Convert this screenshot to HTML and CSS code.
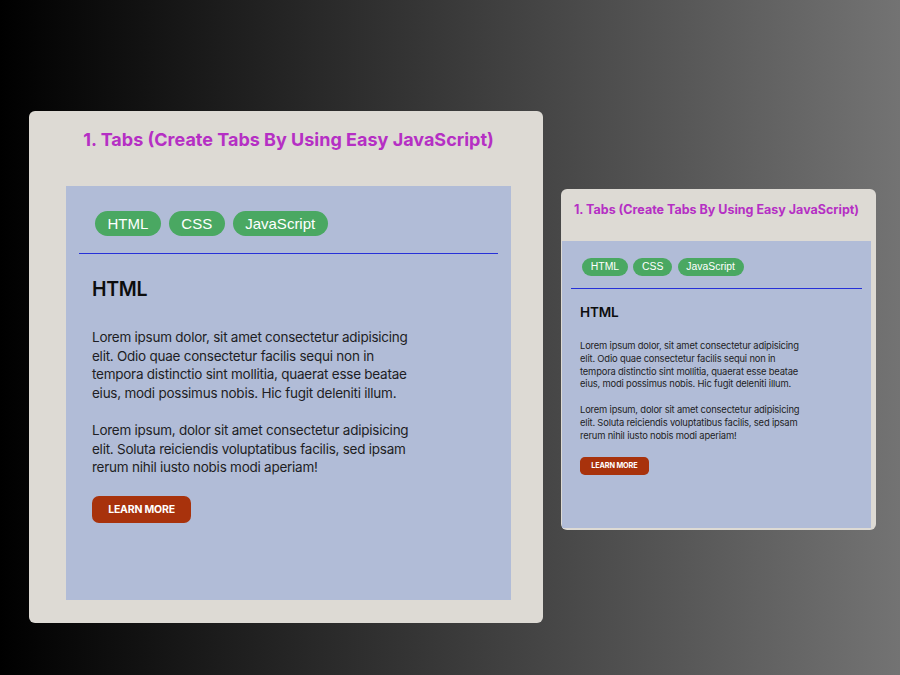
FILE: index.html
```html
<!DOCTYPE html>
<html lang="en">
<head>
<meta charset="utf-8">
<title>Tabs</title>
<link rel="stylesheet" href="styles.css">
</head>
<body>
<main class="stage">
  <section class="card card--large">
    <h1 class="card-title">1. Tabs (Create Tabs By Using Easy JavaScript)</h1>
    <div class="panel">
      <div class="tabs">
        <button class="tab">HTML</button>
        <button class="tab">CSS</button>
        <button class="tab">JavaScript</button>
      </div>
      <div class="content">
        <h2 class="content-title">HTML</h2>
        <p class="text">Lorem ipsum dolor, sit amet consectetur adipisicing elit. Odio quae consectetur facilis sequi non in tempora distinctio sint mollitia, quaerat esse beatae eius, modi possimus nobis. Hic fugit deleniti illum.</p>
        <p class="text">Lorem ipsum, dolor sit amet consectetur adipisicing elit. Soluta reiciendis voluptatibus facilis, sed ipsam rerum nihil iusto nobis modi aperiam!</p>
        <button class="more">LEARN MORE</button>
      </div>
    </div>
  </section>
  <section class="card card--small">
    <h1 class="card-title">1. Tabs (Create Tabs By Using Easy JavaScript)</h1>
    <div class="panel">
      <div class="tabs">
        <button class="tab">HTML</button>
        <button class="tab">CSS</button>
        <button class="tab">JavaScript</button>
      </div>
      <div class="content">
        <h2 class="content-title">HTML</h2>
        <p class="text">Lorem ipsum dolor, sit amet consectetur adipisicing elit. Odio quae consectetur facilis sequi non in tempora distinctio sint mollitia, quaerat esse beatae eius, modi possimus nobis. Hic fugit deleniti illum.</p>
        <p class="text">Lorem ipsum, dolor sit amet consectetur adipisicing elit. Soluta reiciendis voluptatibus facilis, sed ipsam rerum nihil iusto nobis modi aperiam!</p>
        <button class="more">LEARN MORE</button>
      </div>
    </div>
  </section>
</main>
</body>
</html>
```
FILE: styles.css
```css
* { box-sizing: border-box; }
html, body { margin: 0; padding: 0; }
body {
  width: 900px;
  height: 675px;
  background: linear-gradient(to right, #000000 0%, #737373 100%);
  font-family: "Inter", "Open Sans", sans-serif;
  overflow: hidden;
}
.stage {
  display: flex;
  align-items: flex-start;
  gap: 18px;
  padding-left: 29px;
}
.card {
  background: #dddad4;
  border-radius: 6px;
  display: flex;
  flex-direction: column;
}
.card--large {
  margin-top: 111px;
  width: 514px;
  height: 512px;
  padding: 18px 32px 23px 37px;
}
.card--small {
  margin-top: 189px;
  width: 315px;
  height: 341px;
  padding: 13px 5px 1px 1px;
}
.card-title {
  margin: 0;
  text-align: center;
  color: #b52fc4;
  font-weight: 700;
  letter-spacing: 0;
}
.card--large .card-title {
  font-size: 18px;
  line-height: 22px;
  margin-bottom: 35px;
}
.card--small .card-title {
  font-size: 12.5px;
  line-height: 16px;
  margin-bottom: 23px;
}
.panel {
  background: #b1bcd7;
  width: 445px;
  height: 414px;
  padding: 25px 13px 0;
}
.card--small .panel {
  zoom: 0.6944;
}
.tabs {
  display: flex;
  gap: 8px;
  padding: 0 16px 17px;
  border-bottom: 1px solid #2630d8;
}
.tab {
  border: 0;
  margin: 0;
  height: 25px;
  padding: 0 12.5px;
  border-radius: 13px;
  background: #4aa862;
  color: #ffffff;
  font-family: "Liberation Sans", Arial, sans-serif;
  font-size: 15px;
  line-height: 25px;
}
.content {
  padding: 23px 13px 0;
}
.content-title {
  margin: 0 0 27px;
  font-size: 19.5px;
  line-height: 24px;
  font-weight: 600;
  color: #0d0d0d;
  letter-spacing: -0.3px;
}
.text {
  margin: 0 0 19px;
  width: 325px;
  font-size: 13.5px;
  line-height: 18.5px;
  color: #1e1e24;
  letter-spacing: -0.25px;
}
.more {
  margin-top: 0.5px;
  border: 0;
  width: 99px;
  height: 27px;
  border-radius: 7px;
  background: #a8320c;
  color: #ffffff;
  font-family: "Inter", sans-serif;
  font-weight: 700;
  font-size: 10.5px;
  letter-spacing: -0.2px;
  padding: 0;
}
```
